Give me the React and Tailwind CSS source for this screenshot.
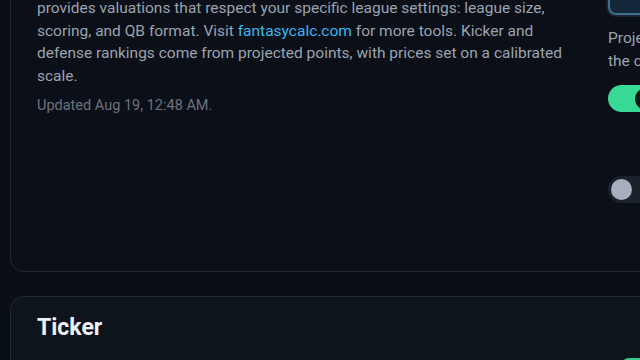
export default function App() {
  const font = { fontFamily: "Roboto, 'Noto Sans', sans-serif" };
  return (
    <div className="w-[640px] h-[360px] overflow-hidden bg-[#0a0e15]" style={font}>
      <div className="w-[900px] pl-[10px]">
        {/* Top card */}
        <div className="mt-[-60px] h-[332px] rounded-[14px] border border-[#242a33] bg-[#0b0f17] flex">
          <div className="w-[570px] pl-[26px] pt-[56px]">
            <p className="text-[15.5px] leading-[22.5px] text-[#9aa3af] whitespace-nowrap">
              provides valuations that respect your specific league settings: league size,
              <br />
              scoring, and QB format. Visit <span className="text-[#38b6f0]">fantasycalc.com</span> for more tools. Kicker and
              <br />
              defense rankings come from projected points, with prices set on a calibrated
              <br />
              scale.
            </p>
            <p className="mt-[9px] text-[14.5px] leading-[20px] text-[#6b7280]">Updated Aug 19, 12:48 AM.</p>
          </div>
          <div className="ml-[27px] w-[260px] pt-[40px] flex flex-col">
            <div className="h-[34px] w-[80px] rounded-[8px] border-2 border-[#3b6f8c] bg-[#13263a] ring-2 ring-[#1a2330] text-[#7fb3d5] text-[13px] flex items-center justify-center">
              Li
            </div>
            <p className="mt-[12px] text-[15.5px] leading-[22.5px] text-[#9aa3af] whitespace-nowrap">
              Projected points
              <br />
              the current
            </p>
            <div className="mt-[13px] h-[27px] w-[52px] rounded-full bg-[#38d995] flex items-center justify-end pr-[3px]">
              <div className="h-[22px] w-[22px] rounded-full bg-[#0b1a14]"></div>
            </div>
            <div className="mt-[64px] h-[27px] w-[52px] rounded-full bg-[#1b222c] flex items-center pl-[3px]">
              <div className="h-[21px] w-[21px] rounded-full bg-[#a5afbd]"></div>
            </div>
          </div>
        </div>
        {/* Second card */}
        <div className="mt-[24px] h-[200px] rounded-[14px] border border-[#242a33] bg-[#0e141c] pl-[26px] pt-[16px] relative">
          <h2 className="text-[23px] font-bold text-[#eef1f5] leading-[30px]">Ticker</h2>
          <div className="mt-[17px] ml-[6px] h-[20px] w-[40px] rounded-[8px] bg-[#34c98a]"></div>
          <div className="absolute left-[610px] top-[61px] h-[20px] w-[60px] rounded-[8px] bg-[#34c98a]"></div>
        </div>
      </div>
    </div>
  );
}
